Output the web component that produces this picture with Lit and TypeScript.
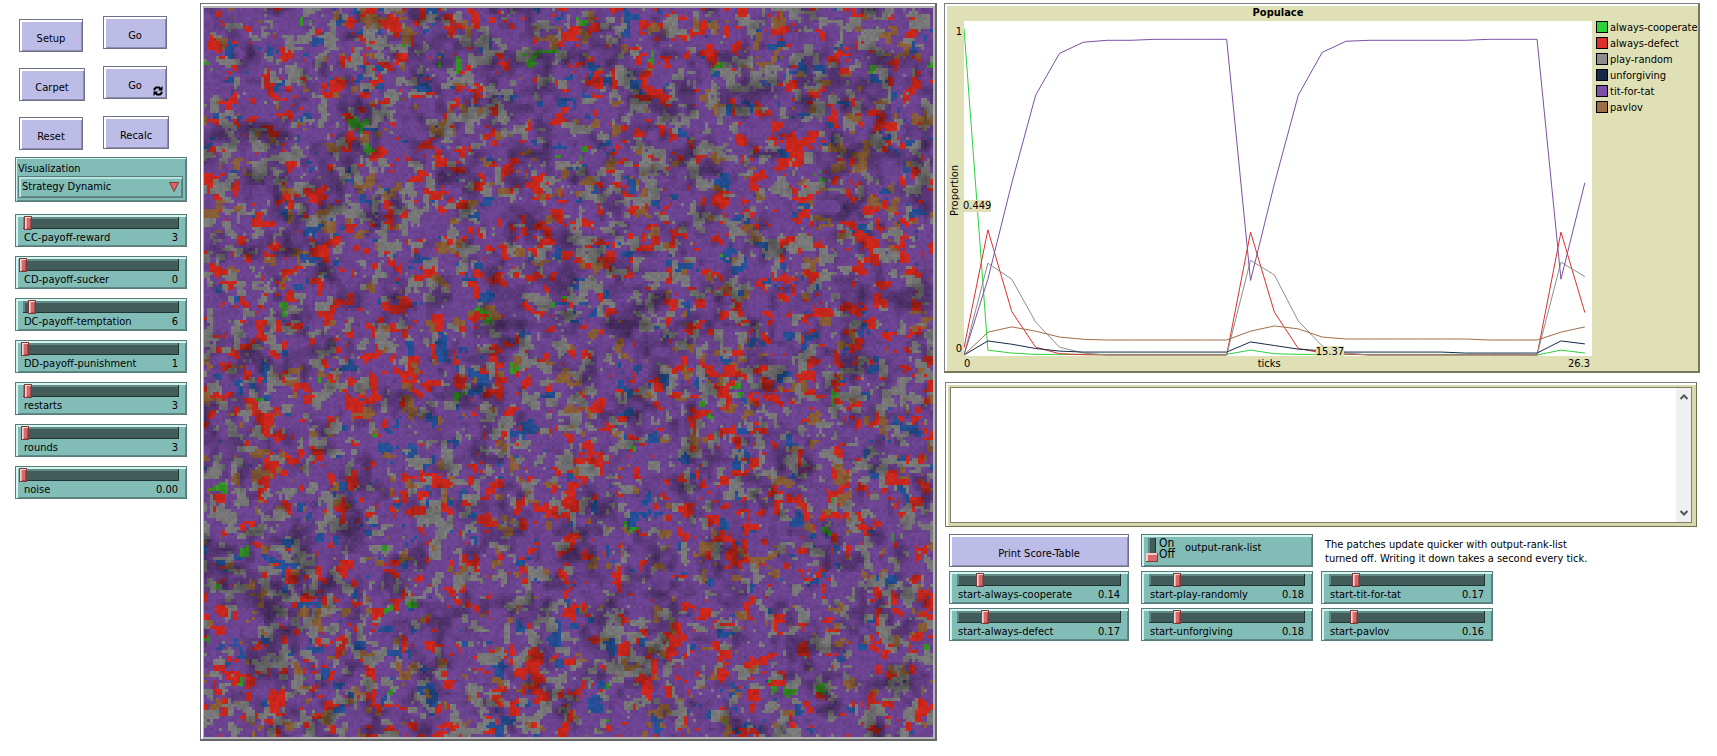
import { LitElement, html, svg, css } from "lit";
import { customElement, property, query } from "lit/decorators.js";

const base = css`
  :host {
    display: block;
    box-sizing: border-box;
    font: 11px/14px "DejaVu Sans Condensed", "DejaVu Sans", sans-serif;
    color: #000;
  }
  *, *::before, *::after { box-sizing: border-box; }
`;

@customElement("nl-button")
export class NlButton extends LitElement {
  @property() label = "";
  @property({ type: Boolean }) forever = false;

  static styles = [base, css`
    .button {
      display: block;
      position: relative;
      width: 100%;
      height: 33px;
      margin: 0;
      padding: 6px 0 0;
      font: inherit;
      color: inherit;
      background: #bcbce6;
      border: 1px solid #70708a;
      box-shadow: inset 2px 2px 0 #fff, inset -1px -1px 0 #8c8cac;
    }
    .loop { position: absolute; right: 3px; bottom: 2px; width: 10px; height: 10px; }
    .arc { fill: none; stroke: #000; stroke-width: 2; }
  `];

  render() {
    return html`<button class="button" type="button">${this.label}${this.forever
      ? html`<svg class="loop" viewBox="0 0 10 10" aria-hidden="true">
          <path class="arc" d="M1.500 4.500V3L3 1.500H6L7.500 3M8.500 5.500V7L7 8.500H4L2.500 7" />
          <path d="M9.500 0V4.500H5zM.5 10V5.500H5z" />
        </svg>`
      : ""}</button>`;
  }
}

@customElement("nl-slider")
export class NlSlider extends LitElement {
  @property() label = "";
  @property() value = "0";
  @property({ type: Number }) max = 100;

  static styles = [base, css`
    .slider {
      height: 33px;
      padding: 1px 3px 0;
      background: #82bcb6;
      border: 1px solid #587c79;
      box-shadow: inset 2px 2px 0 #d4f4f0, inset -1px -1px 0 #5f8985;
    }
    .range {
      appearance: none;
      display: block;
      width: 100%;
      height: 14px;
      margin: 0;
      background:
        linear-gradient(#1f3534, #1f3534) calc(100% - 4px) 50% / 1px 12px no-repeat,
        linear-gradient(#1f3534, #1f3534) 50% 12px / calc(100% - 8px) 1px no-repeat,
        linear-gradient(#5f8985, #5f8985) 50% 1px / calc(100% - 8px) 2px no-repeat,
        linear-gradient(#5f8985, #5f8985) 4px 50% / 2px 12px no-repeat,
        linear-gradient(#425c5a, #425c5a) 50% 50% / calc(100% - 8px) 12px no-repeat;
    }
    .range::-webkit-slider-runnable-track { height: 14px; }
    .range::-webkit-slider-thumb {
      appearance: none;
      width: 8px;
      height: 14px;
      background: #d46a6a;
      border: 1px solid #7e3c3c;
      box-shadow: inset 1px 1px 0 #ffd0d0, inset 2px 0 0 #f0a8a8, inset -1px -1px 0 #a04a4a;
    }
    .caption { display: flex; justify-content: space-between; padding: 1px 5px 0; }
  `];

  render() {
    return html`<div class="slider">
      <input id="range" class="range" type="range" min="0" max=${this.max} step="any" .value=${this.value} />
      <div class="caption"><label for="range">${this.label}</label><output for="range">${this.value}</output></div>
    </div>`;
  }
}

@customElement("nl-chooser")
export class NlChooser extends LitElement {
  static styles = [base, css`
    .chooser {
      height: 45px;
      padding: 4px 3px 0 2px;
      background: #82bcb6;
      border: 1px solid #587c79;
      box-shadow: inset 1px 1px 0 #d4f4f0, inset -1px -1px 0 #5f8985;
    }
    .label { display: block; }
    .field { display: grid; align-items: center; }
    .select {
      appearance: none;
      grid-area: 1 / 1;
      width: 100%;
      height: 22px;
      padding: 0 0 0 3px;
      font: inherit;
      color: inherit;
      background: #82bcb6;
      border: 1px solid #587c79;
      border-radius: 0;
      box-shadow: inset 2px 2px 0 #b8e4df, inset -1px -1px 0 #5f8985;
    }
    .arrow { grid-area: 1 / 1; justify-self: end; width: 10px; height: 10px; margin-right: 4px; pointer-events: none; }
  `];

  render() {
    return html`<div class="chooser">
      <label class="label" for="mode">Visualization</label>
      <div class="field">
        <select id="mode" class="select"><option>Strategy Dynamic</option></select>
        <svg class="arrow" viewBox="0 0 10 10" aria-hidden="true">
          <path d="M.5 .5h9L5 9.500z" fill="#d86464" stroke="#7e3c3c" />
        </svg>
      </div>
    </div>`;
  }
}

@customElement("nl-switch")
export class NlSwitch extends LitElement {
  static styles = [base, css`
    .switch {
      display: flex;
      height: 33px;
      padding: 3px 4px 0;
      background: #82bcb6;
      border: 1px solid #587c79;
      box-shadow: inset 2px 2px 0 #d4f4f0, inset -1px -1px 0 #5f8985;
    }
    .toggle {
      appearance: none;
      width: 12px;
      height: 24px;
      margin: 0;
      background:
        linear-gradient(#7e3c3c, #7e3c3c) 0 23px / 12px 1px no-repeat,
        linear-gradient(#7e3c3c, #7e3c3c) 11px 15px / 1px 9px no-repeat,
        linear-gradient(#ffc8c8, #ffc8c8) 0 15px / 12px 2px no-repeat,
        linear-gradient(#ffc8c8, #ffc8c8) 0 15px / 2px 9px no-repeat,
        linear-gradient(#d46a6a, #d46a6a) 0 15px / 12px 9px no-repeat,
        linear-gradient(#5f8985, #5f8985) 2px 0 / 2px 16px no-repeat,
        linear-gradient(#1f3534, #1f3534) 9px 0 / 1px 16px no-repeat,
        linear-gradient(#425c5a, #425c5a) 2px 0 / 8px 16px no-repeat;
    }
    .states { font-size: 12px; line-height: 11px; padding: 0 10px 0 1px; }
    .state { display: block; }
    .name { padding-top: 3px; }
  `];

  render() {
    return html`<div class="switch">
      <input id="toggle" class="toggle" type="checkbox" />
      <div class="states"><span class="state">On</span><span class="state">Off</span></div>
      <label class="name" for="toggle">output-rank-list</label>
    </div>`;
  }
}

const PATCHES = 243;
const PATCH_PX = 3;

const STRATEGIES: { share: number; rgb: [number, number, number] }[] = [
  { share: 0.535, rgb: [106, 66, 142] },
  { share: 0.215, rgb: [118, 118, 118] },
  { share: 0.135, rgb: [198, 38, 28] },
  { share: 0.065, rgb: [134, 92, 54] },
  { share: 0.043, rgb: [36, 78, 146] },
  { share: 0.007, rgb: [50, 144, 34] },
];

function randomSource(seed: number) {
  let s = seed;
  return () => {
    s = (s + 0x6d2b79f5) | 0;
    let t = Math.imul(s ^ (s >>> 15), 1 | s);
    t = (t + Math.imul(t ^ (t >>> 7), 61 | t)) ^ t;
    return ((t ^ (t >>> 14)) >>> 0) / 4294967296;
  };
}

@customElement("nl-world")
export class NlWorld extends LitElement {
  @query("canvas") private canvas!: HTMLCanvasElement;

  static styles = [base, css`
    .frame {
      width: max-content;
      padding: 4px 2px 2px 3px;
      background: #b4b4b4;
      border-style: solid;
      border-width: 1px 2px 2px 1px;
      border-color: #6e7276 #66666a #66666a #6e7276;
      box-shadow: inset 2px 2px 0 #fff;
    }
    .world { display: block; image-rendering: pixelated; }
  `];

  firstUpdated() {
    const n = PATCHES;
    const random = randomSource(41);
    const cells = new Uint8Array(n * n);
    for (let i = 0; i < cells.length; i++) {
      let r = random();
      let k = 0;
      while (k < STRATEGIES.length - 1 && r > STRATEGIES[k].share) r -= STRATEGIES[k++].share;
      cells[i] = k;
    }
    // Each patch repeatedly adopts the strategy of one of its neighbours;
    // in the last rounds only a strategy held by two of them spreads.
    const copying = n * n * 5;
    const settling = n * n;
    for (let step = 0; step < copying + settling; step++) {
      const x = (random() * n) | 0;
      const y = (random() * n) | 0;
      const around = [
        cells[y * n + ((x + 1) % n)],
        cells[((y + 1) % n) * n + x],
        cells[y * n + ((x + n - 1) % n)],
        cells[((y + n - 1) % n) * n + x],
      ];
      const pick = around[(random() * 4) | 0];
      const held = around.filter((k) => k === pick).length;
      if (step < copying || held > 1) cells[y * n + x] = pick;
    }
    const ease = (a: number) => a * a * (3 - 2 * a);
    const lattice = (step: number) => {
      const w = Math.ceil(n / step) + 2;
      const v = Array.from({ length: w * w }, () => random());
      return (x: number, y: number) => {
        const fx = x / step, fy = y / step;
        const ix = fx | 0, iy = fy | 0;
        const ax = ease(fx - ix), ay = ease(fy - iy);
        const p = iy * w + ix;
        return (v[p] * (1 - ax) + v[p + 1] * ax) * (1 - ay) + (v[p + w] * (1 - ax) + v[p + w + 1] * ax) * ay;
      };
    };
    const broad = lattice(8);
    const fine = lattice(3);
    const ctx = this.canvas.getContext("2d")!;
    for (let y = 0; y < n; y++) {
      for (let x = 0; x < n; x++) {
        const m = broad(x, y) * 0.5 + fine(x, y) * 0.5;
        const light = 1.02 - Math.max(0, m - 0.48) * 0.9 + (random() - 0.5) * 0.12;
        const [r, g, b] = STRATEGIES[cells[y * n + x]].rgb;
        ctx.fillStyle = `rgb(${(r * light) | 0},${(g * light) | 0},${(b * light) | 0})`;
        ctx.fillRect(x * PATCH_PX, y * PATCH_PX, PATCH_PX, PATCH_PX);
      }
    }
  }

  render() {
    const size = PATCHES * PATCH_PX;
    return html`<div class="frame"><canvas class="world" width=${size} height=${size}></canvas></div>`;
  }
}

const TICKS = 26.3;
const fill = (v: number, count: number): number[] => Array(count).fill(v);

// Proportions in thousandths, one value per tick.
const PENS: { name: string; color: string; values: number[] }[] = [
  { name: "always-cooperate", color: "#2cd13b", values: [1000, 15, 6, ...fill(2, 9), 15, 4, ...fill(2, 10), 0, 15, 6] },
  { name: "always-defect", color: "#d9302c", values: [22, 383, 133, 24, 4, 1, ...fill(0, 6), 376, 131, 20, 6, 3, ...fill(0, 8), 376, 130] },
  { name: "play-random", color: "#8d8d8d", values: [0, 281, 232, 101, 24, 6, ...fill(0, 6), 290, 245, 104, 28, 6, ...fill(0, 8), 284, 240] },
  { name: "unforgiving", color: "#16294a", values: [0, 43, 33, 20, 12, ...fill(9, 7), 40, 29, 18, 13, ...fill(9, 5), ...fill(6, 4), 43, 34] },
  { name: "tit-for-tat", color: "#7c50a4", values: [0, 232, 526, 795, 923, 957, 963, 963, ...fill(966, 4), 228, 524, 795, 926, 960, ...fill(963, 5), ...fill(966, 3), 232, 527] },
  { name: "pavlov", color: "#9d6e48", values: [0, 70, 86, 73, 55, 48, ...fill(46, 6), 73, 89, 80, 55, ...fill(49, 6), ...fill(46, 3), 70, 86] },
];

@customElement("nl-plot")
export class NlPlot extends LitElement {
  static styles = [base, css`
    .plot {
      display: grid;
      grid-template: 16px 335px 15px / 17px minmax(0, 1fr) 106px;
      padding: 1px 0 0 2px;
      background: #e0e0b6;
      border: 1px solid #808080;
      border-right: 2px solid #77775c;
      border-bottom: 2px solid #77775c;
      box-shadow: inset 2px 2px 0 #fff;
    }
    .title { grid-column: 2; margin: 0; padding-top: 1px; font-size: 11px; line-height: 14px; text-align: center; }
    .y-axis { grid-column: 1; display: flex; flex-direction: column; justify-content: space-between; align-items: flex-end; padding: 4px 2px 0 0; }
    .y-name { writing-mode: vertical-rl; transform: rotate(180deg); }
    .area { position: relative; background: #fff; }
    .lines { display: block; width: 100%; height: 100%; }
    .line { fill: none; stroke-width: 1; vector-effect: non-scaling-stroke; }
    .tag { position: absolute; background: #e0e0b6; line-height: 12px; }
    .tag-y { left: -1px; top: 179px; }
    .tag-x { left: 56%; bottom: -2px; }
    .legend { list-style: none; margin: 0; padding: 0 0 0 4px; }
    .item { display: flex; gap: 2px; height: 16px; white-space: nowrap; }
    .swatch { width: 12px; height: 12px; border: 1px solid #000; }
    .x-axis { grid-column: 2; display: flex; justify-content: space-between; padding-right: 2px; line-height: 16px; }
  `];

  render() {
    return html`<section class="plot">
      <h2 class="title">Populace</h2>
      <div class="y-axis"><span>1</span><span class="y-name">Proportion</span><span>0</span></div>
      <div class="area">
        <svg class="lines" viewBox="0 0 ${TICKS} 1025" preserveAspectRatio="none">
          ${PENS.map((pen) => svg`<polyline class="line" stroke=${pen.color}
            points=${pen.values.map((v, t) => `${t},${1022 - v}`).join(" ")} />`)}
        </svg>
        <span class="tag tag-y">0.449</span>
        <span class="tag tag-x">15.37</span>
      </div>
      <ul class="legend">
        ${PENS.map((pen) => html`<li class="item"><span class="swatch" style="background:${pen.color}"></span>${pen.name}</li>`)}
      </ul>
      <div class="x-axis"><span>0</span><span>ticks</span><span>${TICKS}</span></div>
    </section>`;
  }
}

@customElement("nl-output")
export class NlOutput extends LitElement {
  static styles = [base, css`
    .output {
      display: grid;
      grid-template-columns: minmax(0, 1fr) 16px;
      height: 145px;
      padding: 4px 4px 3px;
      background: #fff;
      border: 1px solid #808080;
      border-right-color: #6f6f50;
      border-bottom: 1px solid #6f6f50;
      box-shadow: inset 2px 2px 0 #fff, inset 0 0 0 4px #d8d8b0;
    }
    .text {
      width: 100%;
      height: 100%;
      margin: 0;
      padding: 2px;
      resize: none;
      overflow: hidden;
      font: inherit;
      background: #fff;
      border: 1px solid #80806a;
      border-right: 0;
    }
    .bar {
      display: flex;
      flex-direction: column;
      justify-content: space-between;
      align-items: center;
      padding: 4px 0;
      background: #f0f0f0;
      border: 1px solid #80806a;
      border-left: 0;
    }
    .step { display: block; padding: 0; border: 0; background: none; height: 10px; }
    .chevron { display: block; width: 10px; height: 10px; fill: none; stroke: #555; stroke-width: 2; }
  `];

  render() {
    return html`<div class="output">
      <textarea class="text" readonly aria-label="Output"></textarea>
      <div class="bar">
        <button class="step" type="button" aria-label="Scroll up"><svg class="chevron" viewBox="0 0 10 10"><path d="M1.500 7L5 3.500L8.500 7" /></svg></button>
        <button class="step" type="button" aria-label="Scroll down"><svg class="chevron" viewBox="0 0 10 10"><path d="M1.500 3L5 6.500L8.500 3" /></svg></button>
      </div>
    </div>`;
  }
}

@customElement("app-root")
export class AppRoot extends LitElement {
  static styles = [base, css`
    :host { background: #fff; }
    .model { display: flex; align-items: flex-start; padding: 3px 17px 12px 15px; }
    .controls { flex: none; width: 172px; margin-right: 13px; padding-top: 13px; }
    .actions { display: grid; grid-template-columns: 66px 66px; gap: 18px; height: 141px; align-items: start; padding-left: 4px; }
    .stack { display: grid; gap: 17px; }
    .stack-low { gap: 16px; padding-top: 3px; }
    .short { width: 64px; }
    .sliders { display: grid; gap: 9px; padding-top: 12px; }
    .world { flex: none; }
    .results { flex: 1; min-width: 0; margin-left: 7px; }
    .log { margin: 9px 3px 0 1px; }
    .settings { display: grid; grid-template-columns: 184px 172px 172px; gap: 4px 8px; padding: 7px 0 0 5px; }
    .lead { margin-right: 4px; }
    .note { margin: 0; padding: 4px 0 0 4px; white-space: nowrap; }
  `];

  render() {
    return html`<main class="model">
      <section class="controls">
        <div class="actions">
          <div class="stack stack-low">
            <nl-button class="short" label="Setup"></nl-button>
            <nl-button label="Carpet"></nl-button>
            <nl-button class="short" label="Reset"></nl-button>
          </div>
          <div class="stack">
            <nl-button class="short" label="Go"></nl-button>
            <nl-button class="short" label="Go" forever></nl-button>
            <nl-button label="Recalc"></nl-button>
          </div>
        </div>
        <nl-chooser></nl-chooser>
        <div class="sliders">
          <nl-slider label="CC-payoff-reward" value="3"></nl-slider>
          <nl-slider label="CD-payoff-sucker" value="0"></nl-slider>
          <nl-slider label="DC-payoff-temptation" value="6"></nl-slider>
          <nl-slider label="DD-payoff-punishment" value="1"></nl-slider>
          <nl-slider label="restarts" value="3"></nl-slider>
          <nl-slider label="rounds" value="3" max="200"></nl-slider>
          <nl-slider label="noise" value="0.00" max="1"></nl-slider>
        </div>
      </section>
      <nl-world class="world"></nl-world>
      <section class="results">
        <nl-plot></nl-plot>
        <nl-output class="log"></nl-output>
        <div class="settings">
          <nl-button class="lead" label="Print Score-Table"></nl-button>
          <nl-switch></nl-switch>
          <p class="note">The patches update quicker with output-rank-list<br />turned off. Writing it down takes a second every tick.</p>
          <nl-slider class="lead" label="start-always-cooperate" value="0.14" max="1"></nl-slider>
          <nl-slider label="start-play-randomly" value="0.18" max="1"></nl-slider>
          <nl-slider label="start-tit-for-tat" value="0.17" max="1"></nl-slider>
          <nl-slider class="lead" label="start-always-defect" value="0.17" max="1"></nl-slider>
          <nl-slider label="start-unforgiving" value="0.18" max="1"></nl-slider>
          <nl-slider label="start-pavlov" value="0.16" max="1"></nl-slider>
        </div>
      </section>
    </main>`;
  }
}
